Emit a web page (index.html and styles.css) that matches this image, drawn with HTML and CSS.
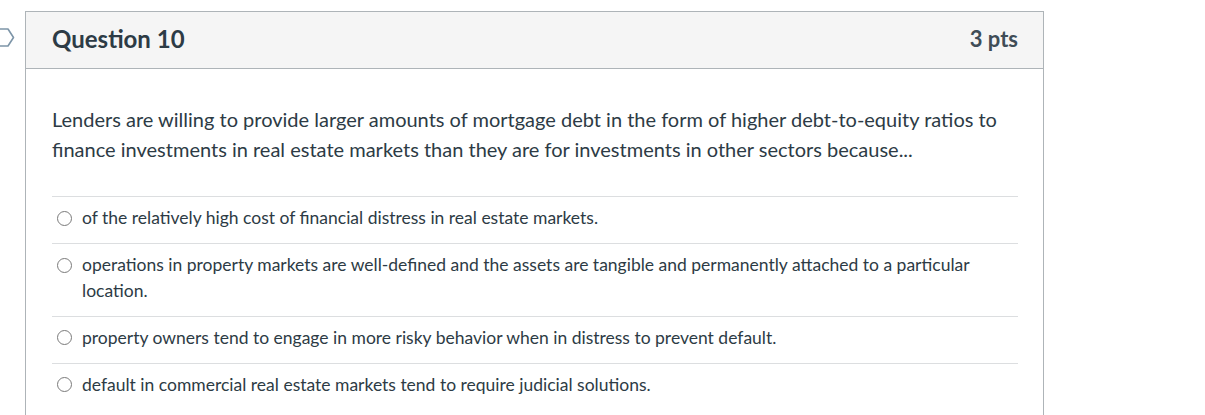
FILE: index.html
```html
<!DOCTYPE html>
<html lang="en">
<head>
<meta charset="utf-8">
<title>Question 10</title>
<link rel="stylesheet" href="styles.css">
</head>
<body>
<div class="page">
  <div class="question">
    <svg class="flag" width="28" height="19" viewBox="0 0 28 19" aria-hidden="true">
      <polygon points="6,1 21,1 26.5,9.5 21,18 6,18 0.5,9.5" fill="#fff" stroke="#7d95a8" stroke-width="1.6" stroke-linejoin="round"/>
    </svg>
    <div class="q-header">
      <span class="q-name">Question 10</span>
      <span class="q-points">3 pts</span>
    </div>
    <div class="q-body">
      <p class="q-text">Lenders are willing to provide larger amounts of mortgage debt in the form of higher debt-to-equity ratios to finance investments in real estate markets than they are for investments in other sectors because...</p>
      <div class="answers">
        <label class="answer"><span class="radio"></span><span class="a-text">of the relatively high cost of financial distress in real estate markets.</span></label>
        <label class="answer"><span class="radio"></span><span class="a-text">operations in property markets are well-defined and the assets are tangible and permanently attached to a particular location.</span></label>
        <label class="answer"><span class="radio"></span><span class="a-text">property owners tend to engage in more risky behavior when in distress to prevent default.</span></label>
        <label class="answer"><span class="radio"></span><span class="a-text">default in commercial real estate markets tend to require judicial solutions.</span></label>
      </div>
    </div>
  </div>
</div>
</body>
</html>
```

FILE: styles.css
```css
html, body {
  margin: 0;
  padding: 0;
  background: #fff;
}

body {
  font-family: Lato, "Liberation Sans", sans-serif;
  color: #2d3b45;
  overflow: hidden;
}

.page {
  padding: 11px 0 0 25px;
}

.question {
  position: relative;
  width: 1019px;
  box-sizing: border-box;
  border: 1px solid #aeb4b8;
  border-bottom: none;
  min-height: 420px;
}

.flag {
  position: absolute;
  left: -39px;
  top: 16px;
}

.q-header {
  height: 56px;
  box-sizing: content-box;
  background: #f5f5f5;
  border-bottom: 1px solid #aeb4b8;
  display: flex;
  align-items: center;
  justify-content: space-between;
  padding: 0 25px 0 26px;
  font-weight: 700;
}

.q-name {
  font-size: 24px;
  color: #2d3b45;
  margin-bottom: 3px;
}

.q-points {
  font-size: 22px;
  color: #3f4d57;
  margin-bottom: 3px;
}

.q-body {
  padding: 35px 25px 0 26px;
}

.q-text {
  margin: 0 0 32px 0;
  font-size: 20px;
  line-height: 30px;
}

.answers {
  display: flex;
  flex-direction: column;
}

.answer {
  display: flex;
  align-items: flex-start;
  border-top: 1px solid #dcdee0;
  padding: 8px 0 12.5px 0;
  font-size: 17.5px;
  line-height: 25.5px;
}

.radio {
  flex: none;
  width: 15px;
  height: 15px;
  box-sizing: border-box;
  border: 1px solid #7a7a7a;
  border-radius: 50%;
  margin: 5.5px 10px 0 5px;
  background: #fff;
}

.a-text {
  flex: 1;
}
```
